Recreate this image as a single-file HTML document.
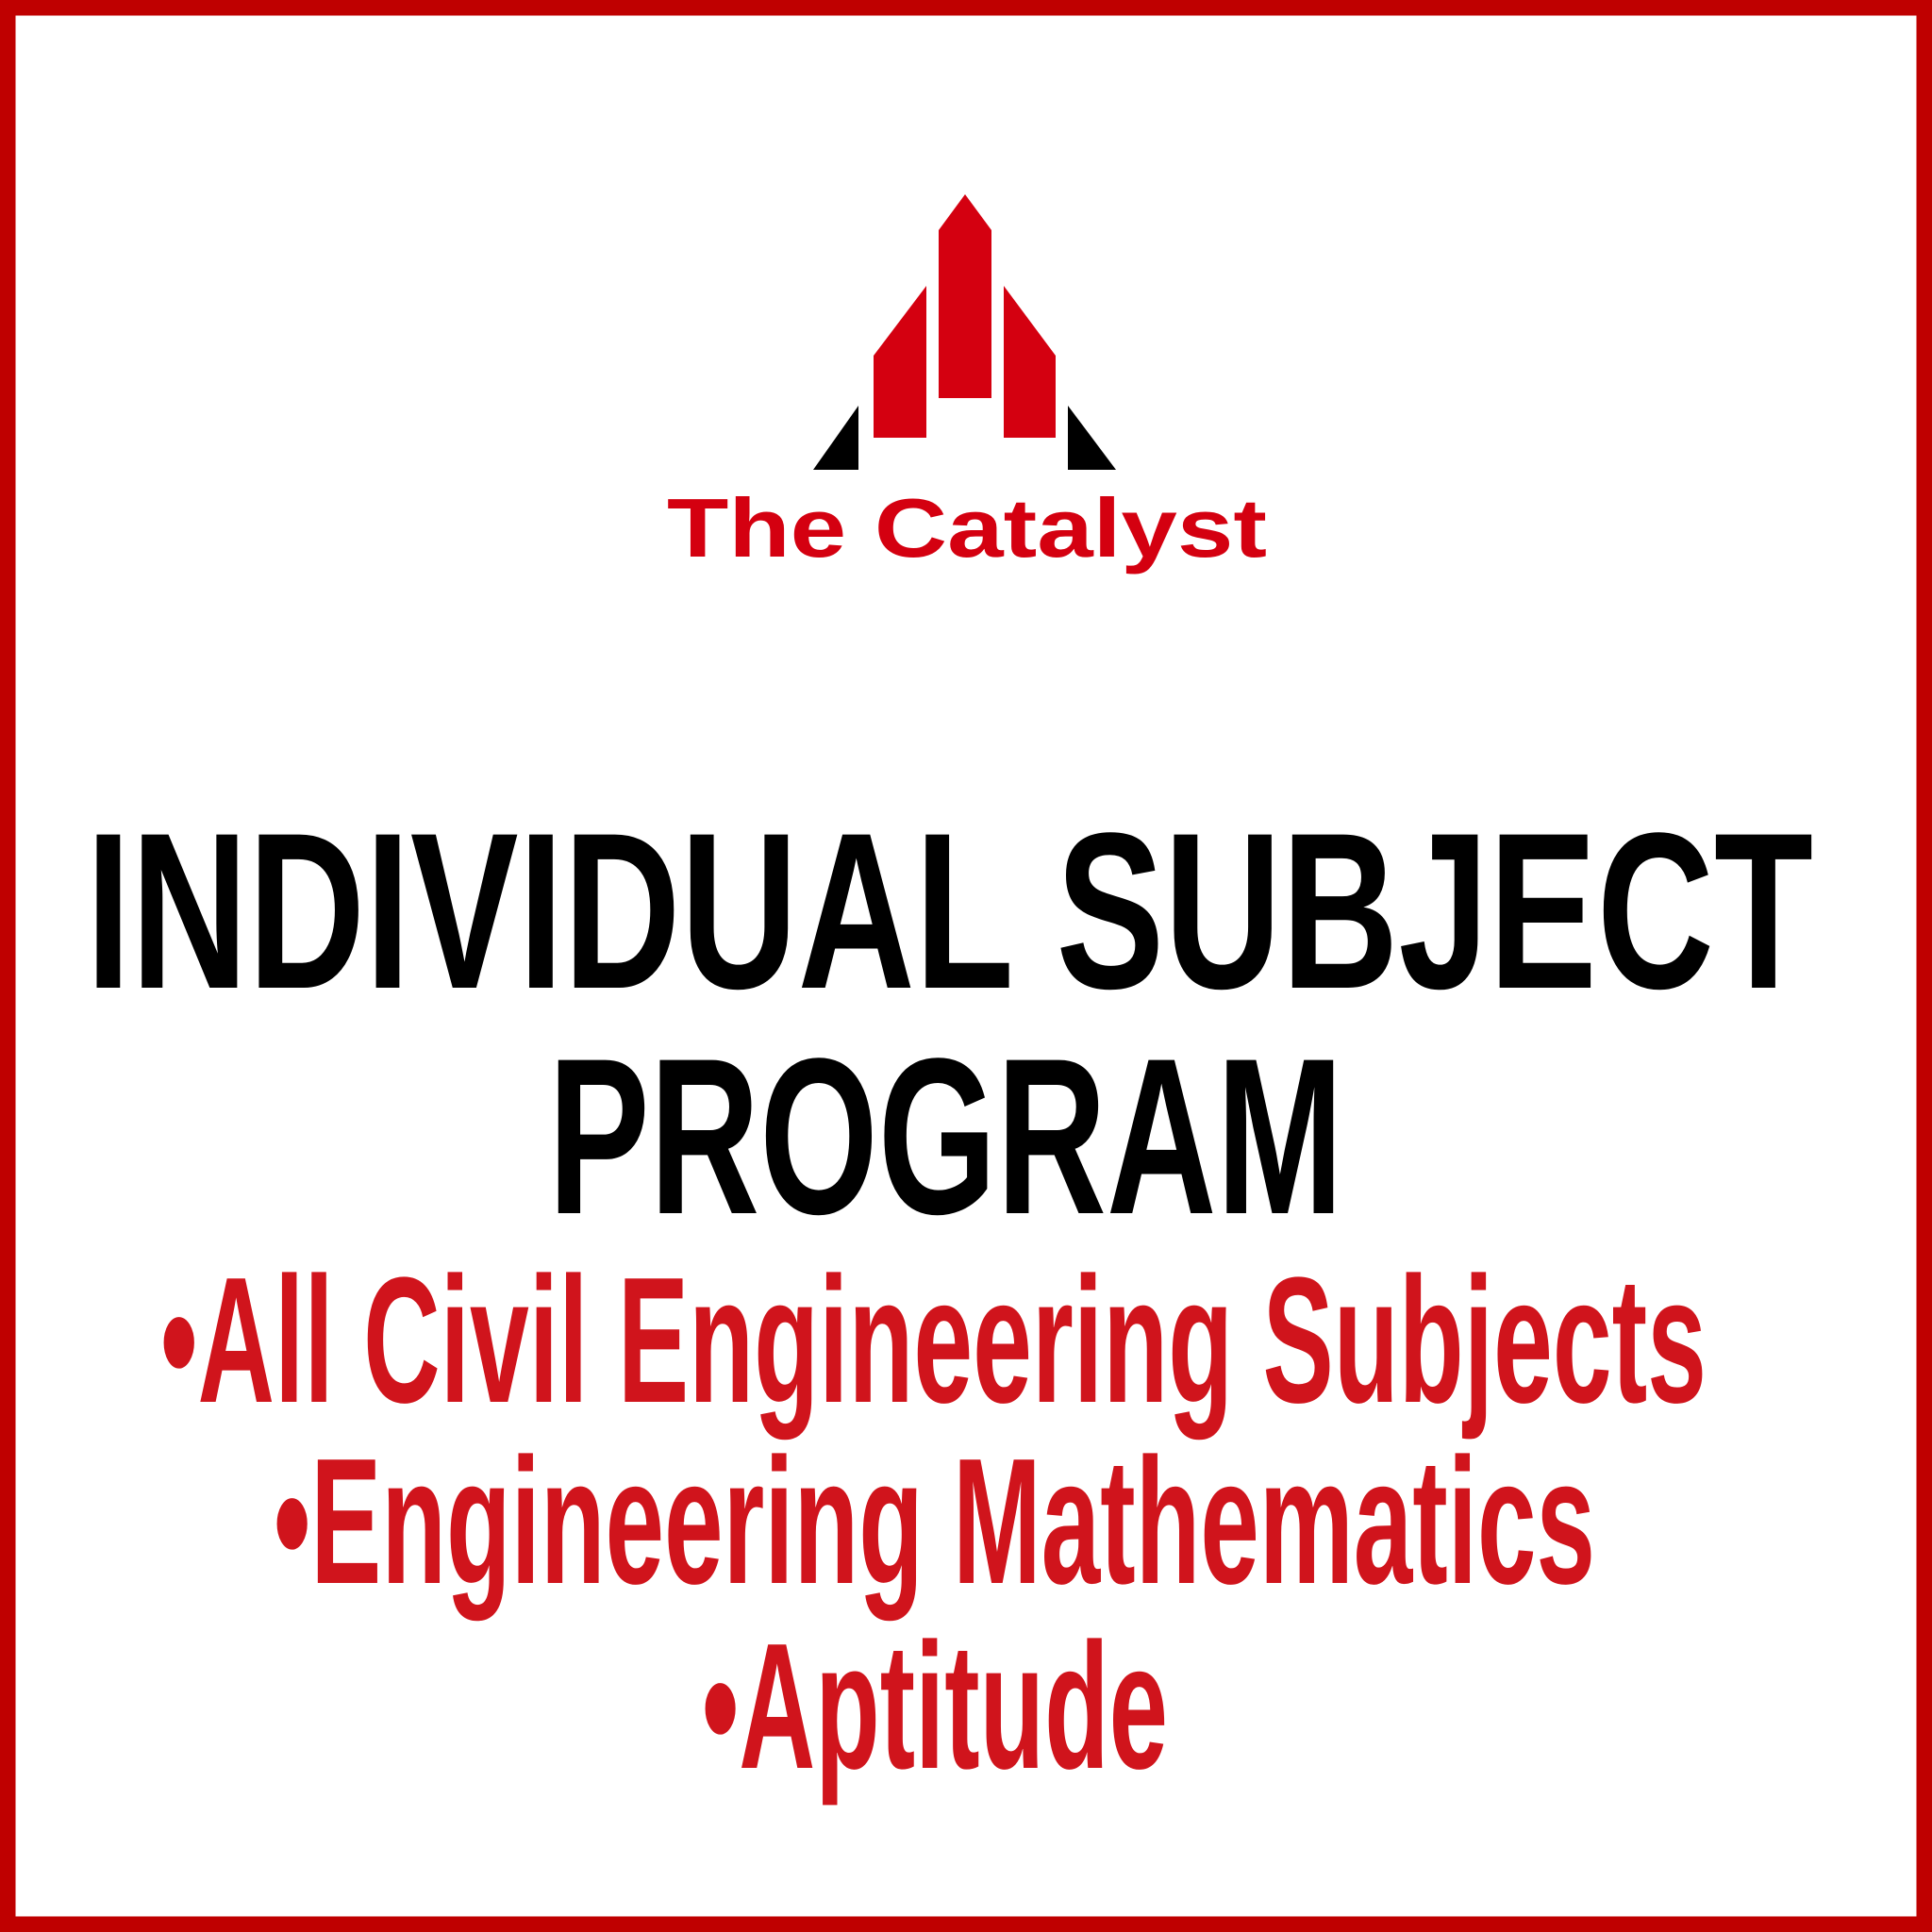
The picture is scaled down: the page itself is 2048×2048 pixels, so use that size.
<!DOCTYPE html>
<html><head><style>html,body{margin:0;padding:0;background:#fff}svg{display:block}</style></head>
<body>
<svg width="2048" height="2048" viewBox="0 0 2048 2048" xmlns="http://www.w3.org/2000/svg">
<rect x="0" y="0" width="2048" height="2048" fill="#fff"/>
<rect x="8" y="8" width="2032" height="2032" fill="none" stroke="#bf0000" stroke-width="17"/>
<g fill="#d40010">
<polygon points="995,244 1023,206 1051,244 1051,422 995,422"/>
<polygon points="926,377 982,303 982,464 926,464"/>
<polygon points="1064,303 1119,377 1119,464 1064,464"/>
</g>
<g fill="#000">
<polygon points="862,498 910,430 910,498"/>
<polygon points="1132,430 1183,498 1132,498"/>
</g>
<text x="707" y="590" font-family="Liberation Sans, sans-serif" font-weight="bold" font-size="88" fill="#d40010" textLength="636" lengthAdjust="spacingAndGlyphs">The Catalyst</text>
<g font-family="Liberation Sans, sans-serif" font-weight="bold" fill="#000">
<text x="91" y="1047" font-size="236" textLength="1831" lengthAdjust="spacingAndGlyphs">INDIVIDUAL SUBJECT</text>
<text x="581" y="1286" font-size="236" textLength="843" lengthAdjust="spacingAndGlyphs">PROGRAM</text>
</g>
<g font-family="Liberation Sans, sans-serif" font-weight="bold" fill="#d0141c">
<text x="170" y="1486" font-size="190" textLength="1639" lengthAdjust="spacingAndGlyphs">•All Civil Engineering Subjects</text>
<text x="290" y="1678" font-size="190" textLength="1401" lengthAdjust="spacingAndGlyphs">•Engineering Mathematics</text>
<text x="744" y="1874" font-size="190" textLength="494" lengthAdjust="spacingAndGlyphs">•Aptitude</text>
</g>
</svg>
</body></html>
